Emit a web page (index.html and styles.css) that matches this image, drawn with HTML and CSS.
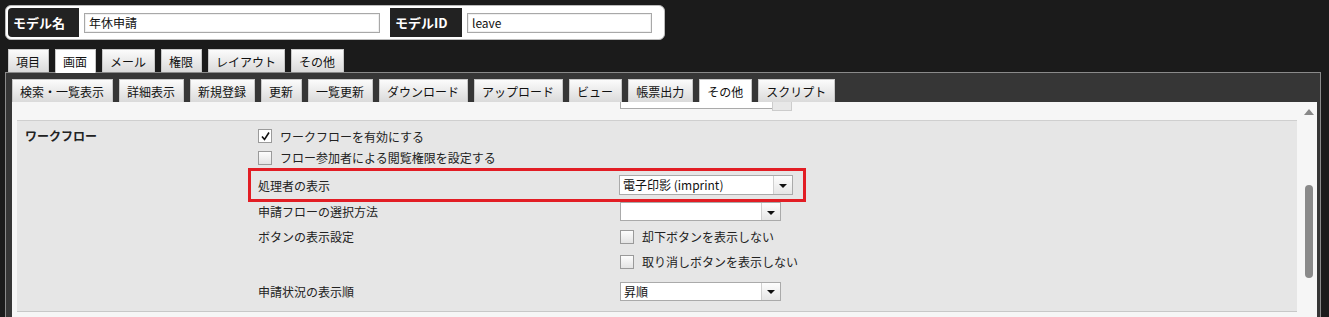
FILE: index.html
```html
<!DOCTYPE html>
<html lang="ja">
  <head>
    <meta charset="UTF-8" />
    <title>モデル設定</title>
    <link rel="stylesheet" href="styles.css">
  </head>
  <body>
    <div class="model-bar">
      <div class="model-label">モデル名</div>
      <div class="model-value"><input class="model-input wide" type="text" value="年休申請"></div>
      <div class="model-label">モデルID</div>
      <div class="model-value"><input class="model-input narrow" type="text" value="leave"></div>
    </div>

    <div class="tabs top-tabs">
      <div class="tab">項目</div>
      <div class="tab active">画面</div>
      <div class="tab">メール</div>
      <div class="tab">権限</div>
      <div class="tab">レイアウト</div>
      <div class="tab">その他</div>
    </div>

    <div class="panel">
      <div class="tabs sub-tabs">
        <div class="tab">検索・一覧表示</div>
        <div class="tab">詳細表示</div>
        <div class="tab">新規登録</div>
        <div class="tab">更新</div>
        <div class="tab">一覧更新</div>
        <div class="tab">ダウンロード</div>
        <div class="tab">アップロード</div>
        <div class="tab">ビュー</div>
        <div class="tab">帳票出力</div>
        <div class="tab active">その他</div>
        <div class="tab">スクリプト</div>
      </div>

      <div class="content">
        <div class="main">
          <div class="prev-row">
            <div class="prev-select"><span class="prev-btn"></span></div>
          </div>

          <div class="section">
            <div class="section-title">ワークフロー</div>
            <div class="section-body">
              <div class="opt-row row-a">
                <span class="check checked">
                  <svg width="11" height="11" viewBox="0 0 11 11"><path d="M2 5.5 L4.5 8.5 L9 1.5" fill="none" stroke="#111" stroke-width="1.6"/></svg>
                </span>
                <span>ワークフローを有効にする</span>
              </div>
              <div class="opt-row row-b">
                <span class="check"></span>
                <span>フロー参加者による閲覧権限を設定する</span>
              </div>
              <div class="opt-row row-c hl">
                <div class="opt-name">処理者の表示</div>
                <div class="select sel-wide">
                  <span class="select-value">電子印影 (imprint)</span>
                  <span class="select-btn"><i class="arrow"></i></span>
                </div>
              </div>
              <div class="opt-row row-d">
                <div class="opt-name">申請フローの選択方法</div>
                <div class="select">
                  <span class="select-value"></span>
                  <span class="select-btn"><i class="arrow"></i></span>
                </div>
              </div>
              <div class="opt-row row-e">
                <div class="opt-name">ボタンの表示設定</div>
                <div class="opt-checks">
                  <div class="check-line"><span class="check"></span><span>却下ボタンを表示しない</span></div>
                  <div class="check-line"><span class="check"></span><span>取り消しボタンを表示しない</span></div>
                </div>
              </div>
              <div class="opt-row row-f">
                <div class="opt-name">申請状況の表示順</div>
                <div class="select">
                  <span class="select-value">昇順</span>
                  <span class="select-btn"><i class="arrow"></i></span>
                </div>
              </div>
            </div>
          </div>
        </div>

        <div class="scrollbar">
          <i class="scroll-up"></i>
          <div class="scroll-thumb"></div>
        </div>
      </div>
    </div>
  </body>
</html>
```

FILE: styles.css
```css
* {
  box-sizing: border-box;
}

html,
body {
  height: 317px;
  overflow: hidden;
}

body {
  margin: 0;
  background: #1b1b1b;
  font-family: "Noto Sans CJK JP", "Noto Sans", sans-serif;
  font-size: 12px;
  color: #222;
}

/* model name bar */
.model-bar {
  display: flex;
  width: 660px;
  margin: 5px 0 0 5px;
  padding: 2px;
  border: 1px solid #bbb;
  border-radius: 6px;
  background: #fff;
}

.model-label {
  width: 72px;
  height: 29px;
  padding-left: 5px;
  display: flex;
  align-items: center;
  background: #222;
  color: #fff;
  font-weight: bold;
  font-size: 13px;
}

.model-label:first-child {
  border-radius: 4px 0 0 4px;
  width: 71px;
}

.model-value {
  display: flex;
  align-items: center;
  padding: 0 10px 0 5px;
}

.model-input {
  height: 20px;
  border: 1px solid #a8a8a8;
  box-shadow: inset 0 0 0 1px #f0f0f0;
  padding: 0 4px;
  font-family: inherit;
  font-size: 12px;
  color: #111;
  outline: none;
}

.model-input.wide {
  width: 296px;
}

.model-input.narrow {
  width: 185px;
}

/* tabs */
.tabs {
  display: flex;
  gap: 6px;
}

.tab {
  height: 23px;
  padding: 0 8px 0 7px;
  display: flex;
  align-items: center;
  border: 1px solid #c8c8c8;
  border-bottom: none;
  background: linear-gradient(#fbfbfb, #dadada);
  color: #111;
  white-space: nowrap;
}

.tab.active {
  background: #fff;
}

.top-tabs {
  margin-top: 9px;
  padding-left: 8px;
  position: relative;
  z-index: 1;
}

.top-tabs .tab.active {
  height: 24px;
  margin-bottom: -1px;
}

/* panel */
.panel {
  width: 1316px;
  margin-left: 5px;
  padding: 6px 3px 0 6px;
  border: 1px solid #8a8a8a;
  border-bottom: none;
  background: #363636;
  height: 260px;
}

.content {
  display: flex;
  background: #f6f6f6;
  height: 230px;
}

.main {
  flex: 1;
  padding-left: 5px;
}

.prev-row {
  height: 18px;
  padding-left: 603px;
}

.prev-select {
  width: 153px;
  height: 7px;
  border: 1px solid #aaa;
  border-top: none;
  background: #fff;
  position: relative;
}

.prev-btn {
  position: absolute;
  right: -20px;
  top: 0;
  width: 20px;
  height: 9px;
  border: 1px solid #ccc;
  border-top: none;
  background: #e8e8e8;
}

.section {
  display: flex;
  background: #e6e6e6;
  border-top: 1px solid #cfcfcf;
  border-bottom: 1px solid #c8c8c8;
  padding: 4px 0 3px 8px;
}

.section-title {
  width: 223px;
  font-weight: bold;
  line-height: 18px;
  padding-top: 2px;
}

.section-body {
  flex: 1;
}

.opt-row {
  display: flex;
  align-items: center;
  width: 558px;
  padding: 0 10px 0 7px;
  border: 3px solid transparent;
  white-space: nowrap;
}

.opt-row.hl {
  border-color: #e21d24;
}

.row-a {
  height: 22px;
}

.row-b {
  height: 21px;
}

.row-c {
  height: 34px;
}

.row-d {
  height: 19px;
}

.row-e {
  height: 53px;
  align-items: flex-start;
}

.row-f {
  height: 34px;
}

.opt-name {
  width: 361px;
  flex-shrink: 0;
}

.row-d .opt-name,
.row-e .opt-name,
.row-f .opt-name {
  width: 362px;
}

.row-e .opt-name {
  line-height: 25px;
}

.check {
  width: 14px;
  height: 14px;
  margin-right: 8px;
  border: 1px solid #9a9a9a;
  background: linear-gradient(#fdfdfd, #e4e4e4);
  display: inline-flex;
  align-items: center;
  justify-content: center;
  flex-shrink: 0;
}

.check.checked {
  background: #fff;
}

.check-line {
  height: 25px;
  display: flex;
  align-items: center;
}

/* select */
.select {
  width: 161px;
  height: 19px;
  display: flex;
  flex-shrink: 0;
  border: 1px solid #aaa;
  background: #fff;
}

.select.sel-wide {
  width: 174px;
  height: 20px;
}

.select-value {
  flex: 1;
  padding-left: 3px;
  line-height: 17px;
  color: #111;
}

.select-btn {
  width: 19px;
  border-left: 1px solid #d0d0d0;
  background: linear-gradient(#fdfdfd, #e6e6e6);
  display: flex;
  align-items: center;
  justify-content: center;
}

.arrow {
  width: 0;
  height: 0;
  border-left: 4px solid transparent;
  border-right: 4px solid transparent;
  border-top: 4px solid #111;
  margin-top: 2px;
}

/* scrollbar */
.scrollbar {
  width: 20px;
  display: flex;
  flex-direction: column;
  align-items: center;
  padding: 7px 0 0 3px;
}

.scroll-up {
  width: 0;
  height: 0;
  border-left: 5px solid transparent;
  border-right: 5px solid transparent;
  border-bottom: 6px solid #888;
}

.scroll-thumb {
  width: 8px;
  height: 93px;
  margin-top: 70px;
  border-radius: 4px;
  background: #8a8a8a;
}
```
